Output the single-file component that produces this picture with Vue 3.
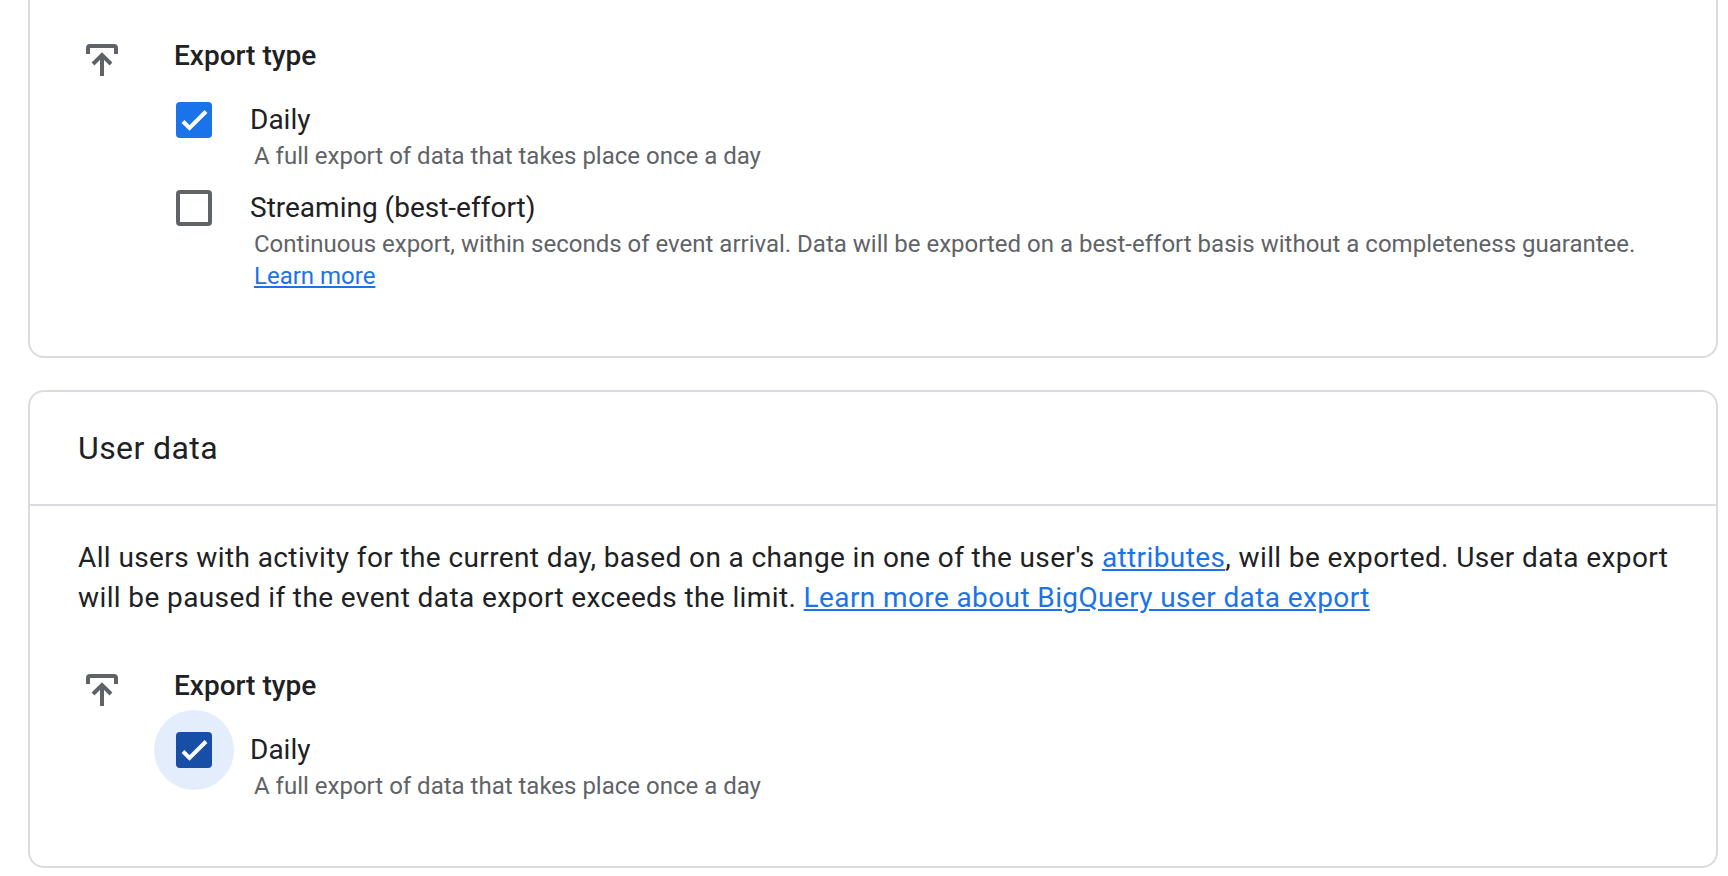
<template>
  <div class="page">
    <section class="card card-first">
      <div class="export">
        <svg class="export-icon" viewBox="0 0 32 32" width="32" height="32">
          <path d="M2 10V4a2 2 0 0 1 2-2h24a2 2 0 0 1 2 2v6" />
          <path d="M16 32V11" />
          <path d="M7 20l9-9 9 9" />
        </svg>
        <div class="export-body">
          <h3 class="export-title">Export type</h3>
          <div v-for="opt in eventOptions" :key="opt.label" class="option">
            <span class="box" :class="{ checked: opt.checked }">
              <svg v-if="opt.checked" viewBox="0 0 36 36" width="36" height="36">
                <path d="M7 19.5l6.5 6.5L30 9.5" />
              </svg>
            </span>
            <div>
              <div class="option-label">{{ opt.label }}</div>
              <p class="option-desc">
                {{ opt.desc }}
                <template v-if="opt.link"><br /><a href="#">{{ opt.link }}</a></template>
              </p>
            </div>
          </div>
        </div>
      </div>
    </section>

    <section class="card">
      <h2 class="card-title">User data</h2>
      <div class="card-content">
        <p class="intro">
          All users with activity for the current day, based on a change in one of the user's
          <a href="#">attributes</a>, will be exported. User data export will be paused if the event data export exceeds the limit.
          <a href="#">Learn more about BigQuery user data export</a>
        </p>
      </div>
      <div class="export export-user">
        <svg class="export-icon" viewBox="0 0 32 32" width="32" height="32">
          <path d="M2 10V4a2 2 0 0 1 2-2h24a2 2 0 0 1 2 2v6" />
          <path d="M16 32V11" />
          <path d="M7 20l9-9 9 9" />
        </svg>
        <div class="export-body">
          <h3 class="export-title">Export type</h3>
          <div class="option">
            <span class="box checked focused">
              <svg viewBox="0 0 36 36" width="36" height="36">
                <path d="M7 19.5l6.5 6.5L30 9.5" />
              </svg>
            </span>
            <div>
              <div class="option-label">Daily</div>
              <p class="option-desc">A full export of data that takes place once a day</p>
            </div>
          </div>
        </div>
      </div>
    </section>
  </div>
</template>

<script setup>
const eventOptions = [
  {
    label: 'Daily',
    desc: 'A full export of data that takes place once a day',
    checked: true,
  },
  {
    label: 'Streaming (best-effort)',
    desc: 'Continuous export, within seconds of event arrival. Data will be exported on a best-effort basis without a completeness guarantee.',
    link: 'Learn more',
    checked: false,
  },
]
</script>

<style>
html,
body {
  margin: 0;
  background: #fff;
  overflow: hidden;
}
</style>

<style scoped>
.page {
  display: flex;
  flex-direction: column;
  gap: 32px;
  height: 876px;
  box-sizing: border-box;
  padding: 0 10px 0 28px;
  font-family: Roboto, "Liberation Sans", sans-serif;
  color: #202124;
}

.card {
  border: 2px solid #dadce0;
  border-radius: 16px;
  background: #fff;
}

.card-first {
  border-top: none;
  border-top-left-radius: 0;
  border-top-right-radius: 0;
}

.card-title {
  margin: 0;
  height: 114px;
  box-sizing: border-box;
  padding-left: 48px;
  font-size: 32px;
  font-weight: 400;
  line-height: 112px;
  letter-spacing: 0.4px;
  border-bottom: 2px solid #dadce0;
}

.card-content {
  padding: 32px 40px 0 48px;
}

.intro {
  margin: 0;
  font-size: 28px;
  line-height: 40px;
  letter-spacing: 0.39px;
}

.intro a,
.option-desc a {
  color: #1a73e8;
}

.export {
  display: flex;
  gap: 56px;
  padding: 39px 0 64px 56px;
}

.export-user {
  padding-top: 51px;
}

.export-icon {
  flex: none;
  margin-top: 5px;
  fill: none;
  stroke: #5f6368;
  stroke-width: 4;
}

.export-title {
  margin: 0 0 29px;
  font-size: 28px;
  font-weight: 500;
  line-height: 34px;
}

.option {
  position: relative;
  z-index: 0;
  display: flex;
  gap: 38px;
  margin: 0 0 18px 2px;
}

.option:last-child {
  margin-bottom: 0;
}

.box {
  position: relative;
  flex: none;
  width: 36px;
  height: 36px;
  box-sizing: border-box;
  border: 4px solid #5f6368;
  border-radius: 4px;
}

.box.checked {
  border: none;
  background: #1a73e8;
}

.box.focused {
  background: #174ea6;
}

.box.focused::before {
  content: "";
  position: absolute;
  left: -22px;
  top: -22px;
  width: 80px;
  height: 80px;
  border-radius: 50%;
  background: #e3edfb;
  z-index: -1;
}

.box svg {
  display: block;
  fill: none;
  stroke: #fff;
  stroke-width: 4;
}

.option-label {
  font-size: 28px;
  line-height: 36px;
}

.option-desc {
  margin: 2px 0 0 4px;
  font-size: 24px;
  line-height: 32px;
  color: #5f6368;
}
</style>
